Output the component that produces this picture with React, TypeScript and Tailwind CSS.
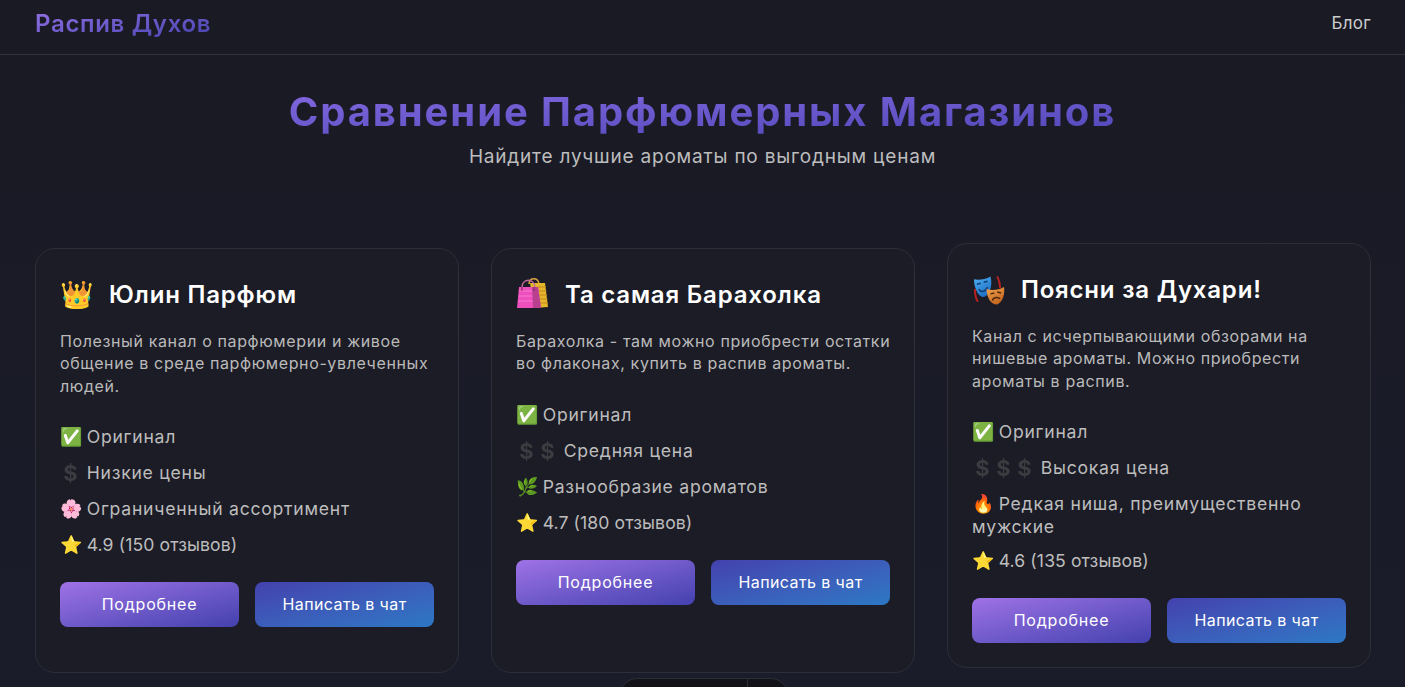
import React from 'react';

type Shop = {
  icon: React.ReactNode;
  name: string;
  text: string;
  items: [string, string][];
  raised?: boolean;
};

const BagsIcon = () => (
  <svg width="32" height="31" viewBox="0 0 32 31" className="-mt-[4px]">
    <path d="M12 6c.5-7 9-7 10 0" fill="none" stroke="#d9a441" strokeWidth="1.5" />
    <path d="M13 5h15l3 24-14 1z" fill="#e5b52c" />
    <path d="M21 9h8M21 13h8.500M21 17h9M21 21h9.500M21 25h10" stroke="#c28a1c" strokeWidth="1.2" />
    <path d="M5 9c.5-9 12-9 13 0" fill="none" stroke="#c26b9c" strokeWidth="1.5" />
    <path d="M2 9h19l3 21H0z" fill="#ee4fbd" />
    <path d="M2 13h20M1.500 18h21M1 23h22" stroke="#f47ccf" strokeWidth="1" />
    <path d="M15 9h6l3 21h-8z" fill="#b9408f" />
    <path d="M5 9v4M17 9v4" stroke="#8e2c6c" strokeWidth="1.2" />
  </svg>
);

const MasksIcon = () => (
  <svg width="33" height="29" viewBox="0 0 33 29" className="ml-px">
    <defs>
      <linearGradient id="mask-blue" x1="0" y1="0" x2="0.6" y2="1">
        <stop offset="0" stopColor="#4fb2f5" />
        <stop offset="1" stopColor="#1f6fc4" />
      </linearGradient>
      <linearGradient id="mask-orange" x1="0" y1="0" x2="0.6" y2="1">
        <stop offset="0" stopColor="#f0a64f" />
        <stop offset="1" stopColor="#c4641f" />
      </linearGradient>
    </defs>
    <path d="M2 13c0 6 1 10 3 13" fill="none" stroke="#b9211f" strokeWidth="2" />
    <path d="M25 0c2 4 3 8 3 12" fill="none" stroke="#b9211f" strokeWidth="2" />
    <path d="M1 3c5 1 12 0 17-3 2 7 1 17-6 21C6 23 1 12 1 3z" fill="url(#mask-blue)" />
    <path d="M4 8l4-1M11 6l4-1" stroke="#0f3f73" strokeWidth="1.5" />
    <path d="M6 13c2 4 7 3 9-2" fill="none" stroke="#0f3f73" strokeWidth="1.6" />
    <path d="M14 13c5 2 13 1 18-2 1 7-1 15-7 18-7 0-11-8-11-16z" fill="url(#mask-orange)" />
    <path d="M18 18l4-1M25 16l4 1" stroke="#4d260c" strokeWidth="1.5" />
    <path d="M20 25c1-4 6-4 8-2" fill="none" stroke="#4d260c" strokeWidth="1.6" />
  </svg>
);

const shops: Shop[] = [
  {
    icon: <span className="text-[27px] leading-[44px]">👑</span>,
    name: 'Юлин Парфюм',
    text: 'Полезный канал о парфюмерии и живое общение в среде парфюмерно-увлеченных людей.',
    items: [
      ['✅', 'Оригинал'],
      ['$', 'Низкие цены'],
      ['🌸', 'Ограниченный ассортимент'],
      ['⭐', '4.9 (150 отзывов)'],
    ],
  },
  {
    icon: <BagsIcon />,
    name: 'Та самая Барахолка',
    text: 'Барахолка - там можно приобрести остатки во флаконах, купить в распив ароматы.',
    items: [
      ['✅', 'Оригинал'],
      ['$$', 'Средняя цена'],
      ['🌿', 'Разнообразие ароматов'],
      ['⭐', '4.7 (180 отзывов)'],
    ],
  },
  {
    icon: <MasksIcon />,
    name: 'Поясни за Духари!',
    text: 'Канал с исчерпывающими обзорами на нишевые ароматы. Можно приобрести ароматы в распив.',
    items: [
      ['✅', 'Оригинал'],
      ['$$$', 'Высокая цена'],
      ['🔥', 'Редкая ниша, преимущественно мужские'],
      ['⭐', '4.6 (135 отзывов)'],
    ],
    raised: true,
  },
];

const ItemMark: React.FC<{ mark: string }> = ({ mark }) => {
  if (mark.startsWith('$')) {
    return (
      <>
        {mark.split('').map((_, i) => (
          <span
            key={i}
            className="inline-block h-[24px] w-[21px] scale-125 text-center text-[17.6px] font-bold leading-[24px] tracking-normal text-[#3b3b40]"
          >
            $
          </span>
        ))}
      </>
    );
  }
  return <span className="inline-block h-[24px] w-[21px] text-[18px] leading-[24px] tracking-normal">{mark}</span>;
};

const ShopCard: React.FC<{ shop: Shop }> = ({ shop }) => (
  <div
    className={`h-[425px] rounded-[20px] border border-[#2e2e38] bg-[#1c1c26] p-6 ${
      shop.raised ? '-translate-y-[5px]' : ''
    }`}
  >
    <div className="flex h-[44px] items-center gap-4">
      <div className="flex w-[33px] justify-center">{shop.icon}</div>
      <h3 className="text-[24px] font-semibold leading-[44px] tracking-[0.8px] text-white">{shop.name}</h3>
    </div>
    <p className="-mr-2 mt-[13px] text-[16px] leading-[22.4px] tracking-[0.62px] text-[#bababa]">{shop.text}</p>
    <ul className="mt-[27.8px] flex flex-col gap-[12px]">
      {shop.items.map(([mark, label]) => (
        <li key={label} className="text-[17.6px] leading-[21px] tracking-[0.75px] text-[#bdbdbd]">
          <ItemMark mark={mark} /> {mark === '⭐' ? <span className="tracking-[0.1px]">{label}</span> : label}
        </li>
      ))}
    </ul>
    <div className="mt-[25px] flex gap-4">
      <button className="h-[45px] flex-1 rounded-lg bg-gradient-to-br from-[#9f72e6] to-[#4341ae] pb-px text-[16px] tracking-[0.8px] text-white">
        Подробнее
      </button>
      <button className="h-[45px] flex-1 rounded-lg bg-gradient-to-br from-[#4341ae] to-[#2b78c5] pb-px text-[16px] tracking-[0.4px] text-white">
        Написать в чат
      </button>
    </div>
  </div>
);

export default function App() {
  return (
    <div className="relative h-[687px] overflow-hidden bg-gradient-to-b from-[#1a1a24] to-[#1a1c2a] font-['Inter','Noto_Sans',sans-serif]">
      <nav className="flex h-[55px] items-center justify-between border-b border-[#33333b] px-[34px] pb-[6px]">
        <span className="ml-px bg-gradient-to-br from-[#9672e6] to-[#4341ae] bg-clip-text text-[24px] font-semibold tracking-[0.67px] text-transparent">
          Распив Духов
        </span>
        <a className="text-[17px] tracking-[0.3px] text-[#cccccc]">Блог</a>
      </nav>
      <header className="pt-[29px] text-center">
        <h1 className="bg-gradient-to-br from-[#9070ea] to-[#4640b0] bg-clip-text text-[40px] font-bold leading-[56px] tracking-[1.9px] text-transparent">
          Сравнение Парфюмерных Магазинов
        </h1>
        <p className="mt-[4px] text-[19px] leading-[26px] tracking-[0.8px] text-[#bdbdbd]">
          Найдите лучшие ароматы по выгодным ценам
        </p>
      </header>
      <main className="mt-[78px] grid grid-cols-[424px_424px_424px] gap-8 px-[35px]">
        {shops.map((shop) => (
          <ShopCard key={shop.name} shop={shop} />
        ))}
      </main>
      <div className="absolute left-[618px] top-[678px] flex h-[40px] w-[172px] rounded-[20px] border border-[#2e2e38] bg-[#121218]">
        <div className="w-[129px] border-r border-[#2e2e38]" />
      </div>
    </div>
  );
}
